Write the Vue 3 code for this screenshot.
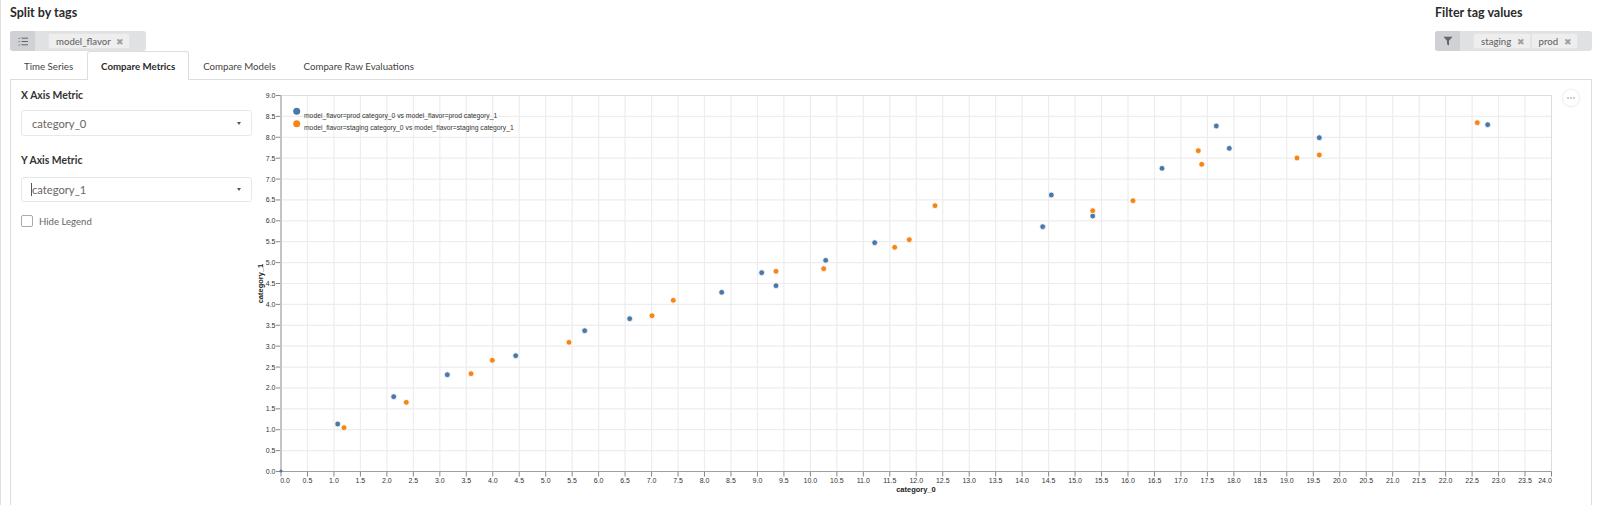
<template>
  <div class="page">
    <div class="top-row">
      <div class="tag-group">
        <h3 class="group-title">Split by tags</h3>
        <div class="tag-bar split">
          <span class="bar-icon">
            <svg width="10" height="9" viewBox="0 0 10 9">
              <path d="M3.5 1.2H10M3.5 4.5H10M3.5 7.8H10" stroke="#666" stroke-width="1" fill="none" />
              <path d="M0.3 1.2l0.7 0.7 1-1.2M0.3 4.5l0.7 0.7 1-1.2M0.3 7.8l0.7 0.7 1-1.2" stroke="#666" stroke-width="0.7" fill="none" />
            </svg>
          </span>
          <div class="chips">
            <span class="chip">model_flavor <i class="chip-x">✖</i></span>
          </div>
        </div>
      </div>
      <div class="tag-group">
        <h3 class="group-title">Filter tag values</h3>
        <div class="tag-bar filter">
          <span class="bar-icon">
            <svg width="10" height="10" viewBox="0 0 10 10">
              <path d="M0.4 0.8H9.6L6 4.8V9.4L4 8.2V4.8Z" fill="#666" />
            </svg>
          </span>
          <div class="chips">
            <span v-for="value in filterValues" :key="value" class="chip">{{ value }} <i class="chip-x">✖</i></span>
          </div>
        </div>
      </div>
    </div>

    <div class="tabs">
      <span
        v-for="tab in tabs"
        :key="tab"
        class="tab"
        :class="{ active: tab === 'Compare Metrics' }"
      >{{ tab }}</span>
    </div>

    <div class="panel">
      <div class="sidebar">
        <label class="field-label">X Axis Metric</label>
        <div class="select x-select">
          <span>category_0</span>
          <span class="caret"></span>
        </div>
        <label class="field-label">Y Axis Metric</label>
        <div class="select y-select">
          <span class="typing">category_1</span>
          <span class="caret"></span>
        </div>
        <div class="check-row">
          <span class="checkbox"></span>
          <span>Hide Legend</span>
        </div>
      </div>

      <svg class="chart" width="1320" height="420" viewBox="256 85 1320 420">
        <g class="grid">
          <line v-for="t in xTicks" :key="'gx' + t.label" :x1="t.pos" :x2="t.pos" :y1="plot.top" :y2="plot.bottom" />
          <line v-for="t in yTicks" :key="'gy' + t.label" :x1="plot.left" :x2="plot.right" :y1="t.pos" :y2="t.pos" />
        </g>
        <line class="frame" :x1="plot.left" :x2="plot.right" :y1="plot.top" :y2="plot.top" />
        <line class="frame" :x1="plot.right" :x2="plot.right" :y1="plot.top" :y2="plot.bottom" />

        <g class="ticks">
          <line v-for="t in xTicks" :key="'tx' + t.label" :x1="t.pos" :x2="t.pos" :y1="plot.bottom" :y2="plot.bottom + 5" />
          <line v-for="t in yTicks" :key="'ty' + t.label" :x1="plot.left - 5" :x2="plot.left" :y1="t.pos" :y2="t.pos" />
        </g>
        <line class="y-axis" :x1="plot.left" :x2="plot.left" :y1="plot.top" :y2="plot.bottom" />
        <line class="x-axis" :x1="plot.left" :x2="plot.right" :y1="plot.bottom" :y2="plot.bottom" />

        <text v-for="t in xTicks" :key="'lx' + t.label" class="tick-label" :x="t.labelPos" :y="plot.bottom + 11" text-anchor="middle">{{ t.label }}</text>
        <text v-for="t in yTicks" :key="'ly' + t.label" class="tick-label" :x="plot.left - 5.5" :y="t.pos + 2.5" text-anchor="end">{{ t.label }}</text>

        <text class="axis-title" x="916" y="492" text-anchor="middle">category_0</text>
        <text class="axis-title" x="263" y="283.5" text-anchor="middle" transform="rotate(-90 263 283.5)">category_1</text>

        <circle cx="281" cy="471" r="1.5" fill="#4c78a8" />
        <circle v-for="p in prodPoints" :key="'p' + p[0] + p[1]" class="dot" :cx="p[0]" :cy="p[1]" r="2.9" fill="#4c78a8" />
        <circle v-for="p in stagingPoints" :key="'s' + p[0] + p[1]" class="dot" :cx="p[0]" :cy="p[1]" r="2.9" fill="#f58518" />

        <circle cx="296.7" cy="111.3" r="3.5" fill="#4c78a8" />
        <circle cx="296.7" cy="123.7" r="3.5" fill="#f58518" />
        <text class="legend" x="304" y="117.5">model_flavor=prod category_0 vs model_flavor=prod category_1</text>
        <text class="legend" x="304" y="129.5">model_flavor=staging category_0 vs model_flavor=staging category_1</text>
      </svg>

      <button class="more-btn"><span></span><span></span><span></span></button>
    </div>
  </div>
</template>

<script setup>
const tabs = ['Time Series', 'Compare Metrics', 'Compare Models', 'Compare Raw Evaluations']
const filterValues = ['staging', 'prod']

// page pixel coordinates of the plot area
const plot = { left: 281, right: 1551.5, top: 95.5, bottom: 471.5 }

const xTicks = []
for (let i = 0; i <= 48; i++) {
  const pos = plot.left + ((plot.right - plot.left) * i) / 48
  let labelPos = pos
  if (i === 0) labelPos = pos + 4
  if (i === 48) labelPos = pos - 6.5
  xTicks.push({ label: (i / 2).toFixed(1), pos, labelPos })
}

const yTicks = []
for (let i = 0; i <= 18; i++) {
  yTicks.push({
    label: (i / 2).toFixed(1),
    pos: plot.bottom - ((plot.bottom - plot.top) * i) / 18
  })
}

const prodPoints = [
  [337.7, 424], [393.7, 396.7], [447.3, 374.7], [515.7, 355.7], [584.7, 330.7],
  [629.7, 318.7], [721.7, 292.3], [761.7, 272.7], [776, 285.7], [825.7, 260.3],
  [874.7, 242.7], [1042.7, 226.7], [1051.3, 195], [1092.7, 216], [1162, 168.3],
  [1216.3, 126], [1229.3, 148.3], [1319.3, 137.7], [1487.7, 124.7]
]

const stagingPoints = [
  [344, 427.7], [406.3, 402.3], [471, 373.7], [492.3, 360.3], [569, 342.3],
  [652, 315.7], [673.3, 300.3], [776, 271.3], [823.7, 268.7], [894.7, 247.3],
  [909.3, 239.7], [935, 205.7], [1092.7, 210.7], [1133, 200.7], [1198.3, 150.7],
  [1201.7, 164.3], [1297, 158], [1319.3, 155], [1477.3, 122.7]
]
</script>

<style>
html,
body {
  margin: 0;
  background: #fff;
  overflow: hidden;
}
</style>

<style scoped>
.page {
  height: 505px;
  box-sizing: border-box;
  padding: 0 8px 0 10px;
  font-family: Lato, "Open Sans", sans-serif;
  color: #333;
  position: relative;
  box-shadow: inset 1px 0 0 #e0e0e0;
  overflow: hidden;
}

.top-row {
  display: flex;
  justify-content: space-between;
  height: 51px;
}

.group-title {
  margin: 0;
  padding-top: 5px;
  height: 26px;
  box-sizing: border-box;
  font-size: 12.5px;
  line-height: 16px;
  font-weight: 700;
  color: #2b2b2b;
}

.tag-bar {
  display: flex;
  height: 20px;
  margin-top: 5px;
  background: #e0e1e3;
  border-radius: 3px;
  overflow: hidden;
}

.tag-bar.split {
  width: 136px;
}

.tag-bar.filter {
  width: 157px;
}

.bar-icon {
  width: 25px;
  display: flex;
  align-items: center;
  justify-content: center;
  background: #cfd1d4;
}

.chips {
  display: flex;
  padding: 2px 0 2px 13px;
}

.chip {
  display: flex;
  align-items: center;
  gap: 3px;
  padding: 0 5px 0 7px;
  background: #eeeeef;
  border: 1px solid #e4e4e4;
  border-radius: 2px;
  font-size: 9.6px;
  font-weight: 500;
  color: #666;
  white-space: pre;
}

.chip-x {
  font-style: normal;
  font-size: 9px;
  color: #a0a0a0;
}

.tabs {
  display: flex;
  height: 28px;
}

.tab {
  padding: 0 13px;
  font-size: 9.7px;
  line-height: 28px;
  color: #444;
  border: 1px solid transparent;
  border-bottom: none;
  box-sizing: border-box;
}

.tab.active {
  font-weight: 700;
  color: #2b2b2b;
  background: #fff;
  border-color: #ddd;
  border-radius: 3px 3px 0 0;
  position: relative;
  z-index: 1;
  height: 29px;
}

.panel {
  display: flex;
  align-items: flex-start;
  height: 430px;
  border: 1px solid #ddd;
  position: relative;
}

.sidebar {
  width: 245px;
  flex-shrink: 0;
  box-sizing: border-box;
  padding: 7px 0 0 10px;
  font-size: 11px;
}

.field-label {
  display: block;
  font-size: 10.4px;
  line-height: 16px;
  font-weight: 700;
  color: #333;
}

.select {
  width: 231px;
  box-sizing: border-box;
  display: flex;
  align-items: center;
  justify-content: space-between;
  padding: 0 10px;
  border: 1px solid #e8e8e8;
  border-radius: 3px;
  font-size: 11.2px;
  color: #666;
}

.x-select {
  height: 26px;
  margin: 7px 0 16px;
}

.y-select {
  height: 25px;
  margin: 9px 0 13px;
}

.typing {
  border-left: 1px solid #555;
  margin-left: -1px;
  line-height: 13px;
}

.caret {
  width: 0;
  height: 0;
  border-left: 2.5px solid transparent;
  border-right: 2.5px solid transparent;
  border-top: 3px solid #555;
}

.check-row {
  display: flex;
  align-items: center;
  gap: 6px;
  font-size: 9.6px;
  color: #666;
}

.checkbox {
  width: 12px;
  height: 12px;
  box-sizing: border-box;
  border: 1px solid #aaa;
  border-radius: 2px;
}

.chart {
  flex-shrink: 0;
  margin-top: 5px;
  display: block;
}

.grid line {
  stroke: #ededed;
  stroke-width: 1.2;
}

.frame {
  stroke: #ddd;
  stroke-width: 1;
}

.ticks line {
  stroke: #888;
  stroke-width: 1;
}

.y-axis {
  stroke: #c4c4c4;
  stroke-width: 2;
}

.x-axis {
  stroke: #a0a0a0;
  stroke-width: 1;
}

.tick-label {
  font-family: "Liberation Sans", Arial, sans-serif;
  font-size: 7px;
  fill: #333;
}

.axis-title {
  font-family: "Liberation Sans", Arial, sans-serif;
  font-size: 7.5px;
  font-weight: 700;
  fill: #222;
}

.legend {
  font-family: "Liberation Sans", Arial, sans-serif;
  font-size: 6.75px;
  fill: #333;
}

.dot {
  stroke: #fff;
  stroke-width: 0.8;
}

.more-btn {
  position: absolute;
  top: 9px;
  right: 11px;
  width: 18px;
  height: 18px;
  padding: 0;
  display: flex;
  align-items: center;
  justify-content: center;
  gap: 1px;
  background: #fff;
  border: 1px solid #f2f2f2;
  border-radius: 50%;
  box-shadow: 0 0 2px rgba(0, 0, 0, 0.08);
}

.more-btn span {
  width: 2px;
  height: 2px;
  border-radius: 50%;
  background: #bbb;
}
</style>
